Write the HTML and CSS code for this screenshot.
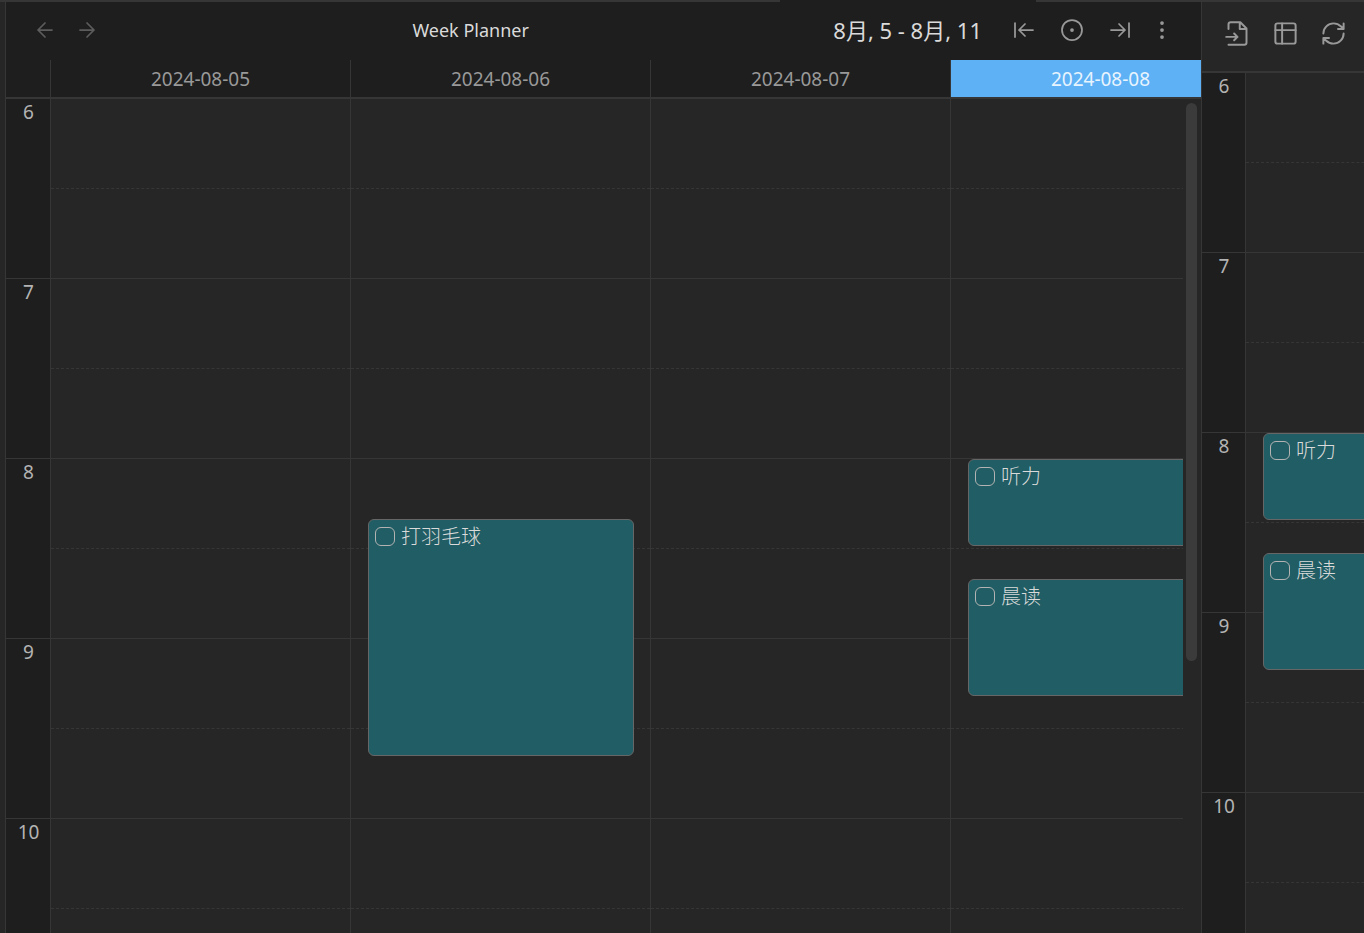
FILE: index.html
```html
<!DOCTYPE html>
<html lang="zh-CN">
<head>
<meta charset="utf-8">
<title>Week Planner</title>
<link rel="stylesheet" href="styles.css">
</head>
<body>
<div class="tab-edge"><span class="edge"></span><span class="active-tab"></span><span class="edge"></span></div>
<div class="workspace">
  <div class="ribbon"></div>
  <main class="pane planner">
    <header class="view-header">
      <nav class="history">
        <button class="icon-button dim" aria-label="Back"><svg viewBox="0 0 24 24"><path d="m12 19-7-7 7-7M19 12H5"/></svg></button>
        <button class="icon-button dim" aria-label="Forward"><svg viewBox="0 0 24 24"><path d="m12 5 7 7-7 7M5 12h14"/></svg></button>
      </nav>
      <h1 class="title">Week Planner</h1>
      <div class="range">8月, 5 - 8月, 11</div>
      <div class="actions">
        <button class="icon-button" aria-label="Previous week"><svg viewBox="0 0 24 24"><path d="M3 19V5M13 6l-6 6 6 6M7 12h14"/></svg></button>
        <button class="icon-button" aria-label="Current week"><svg viewBox="0 0 24 24"><circle cx="12" cy="12" r="10"/><circle cx="12" cy="12" r="1"/></svg></button>
        <button class="icon-button" aria-label="Next week"><svg viewBox="0 0 24 24"><path d="M17 12H3M11 18l6-6-6-6M21 5v14"/></svg></button>
        <button class="icon-button more" aria-label="More options"><svg viewBox="0 0 24 24"><circle cx="12" cy="12" r="1"/><circle cx="12" cy="5" r="1"/><circle cx="12" cy="19" r="1"/></svg></button>
      </div>
    </header>
    <div class="dates">
      <div class="corner"></div>
      <div class="date">2024-08-05</div>
      <div class="date">2024-08-06</div>
      <div class="date">2024-08-07</div>
      <div class="date today">2024-08-08</div>
    </div>
    <div class="body">
      <div class="timeline">
        <div class="ruler">
          <div class="label">6</div><div class="label">7</div><div class="label">8</div><div class="label">9</div><div class="label">10</div>
        </div>
        <div class="day"><div class="hour"></div><div class="hour"></div><div class="hour"></div><div class="hour"></div><div class="hour"></div></div>
        <div class="day">
          <div class="hour"></div><div class="hour"></div><div class="hour"></div><div class="hour"></div><div class="hour"></div>
          <label class="event badminton"><input type="checkbox"><span>打羽毛球</span></label>
        </div>
        <div class="day"><div class="hour"></div><div class="hour"></div><div class="hour"></div><div class="hour"></div><div class="hour"></div></div>
        <div class="day">
          <div class="hour"></div><div class="hour"></div><div class="hour"></div><div class="hour"></div><div class="hour"></div>
          <label class="event listening"><input type="checkbox"><span>听力</span></label>
          <label class="event reading"><input type="checkbox"><span>晨读</span></label>
        </div>
      </div>
      <div class="scroll-track"><div class="scroll-thumb"></div></div>
    </div>
  </main>
  <aside class="pane sidebar">
    <header class="side-header">
      <button class="icon-button large" aria-label="Open daily note"><svg viewBox="0 0 24 24"><path d="M4 22h14a2 2 0 0 0 2-2V7.500L14.500 2H6a2 2 0 0 0-2 2v4M14 2v6h6M2 15h10M9 18l3-3-3-3"/></svg></button>
      <button class="icon-button large" aria-label="Open week planner"><svg viewBox="0 0 24 24"><rect x="3" y="3" width="18" height="18" rx="2"/><path d="M3 9h18M9 3v18"/></svg></button>
      <button class="icon-button large" aria-label="Refresh"><svg viewBox="0 0 24 24"><path d="M3 12a9 9 0 0 1 9-9 9.750 9.750 0 0 1 6.740 2.740L21 8M21 3v5h-5M21 12a9 9 0 0 1-9 9 9.750 9.750 0 0 1-6.740-2.740L3 16M8 16H3v5"/></svg></button>
    </header>
    <div class="timeline">
      <div class="ruler">
        <div class="label">6</div><div class="label">7</div><div class="label">8</div><div class="label">9</div><div class="label">10</div>
      </div>
      <div class="day">
        <div class="hour"></div><div class="hour"></div><div class="hour"></div><div class="hour"></div><div class="hour"></div>
        <label class="event listening"><input type="checkbox"><span>听力</span></label>
        <label class="event reading"><input type="checkbox"><span>晨读</span></label>
      </div>
    </div>
  </aside>
</div>
</body>
</html>
```
FILE: styles.css
```css
:root {
  --bg: #262626;
  --bg-dark: #1e1e1e;
  --line: #363636;
  --muted: #999999;
  --text: #dadada;
  --accent: #5eb1f5;
  --event: #205d64;
}

*, *::before { box-sizing: border-box; }

body {
  margin: 0;
  height: 100vh;
  display: flex;
  flex-direction: column;
  overflow: hidden;
  background: var(--bg);
  color: var(--text);
  font-family: "Noto Sans", "Noto Sans CJK SC", sans-serif;
  font-size: 19px;
}

.tab-edge {
  display: grid;
  grid-template-columns: 1fr 256px 328px;
  height: 2px;
  flex: none;
}
.edge { background: var(--line); }
.active-tab { background: var(--bg-dark); }

.workspace {
  flex: 1;
  min-height: 0;
  display: flex;
}
.ribbon { flex: 0 0 5px; }

.pane {
  display: flex;
  flex-direction: column;
  border-left: 1px solid var(--line);
  overflow: hidden;
}
.planner { flex: 1; min-width: 0; }
.sidebar { flex: 0 0 163px; }

.view-header {
  flex: none;
  display: flex;
  align-items: center;
  height: 58px;
  padding: 0 27px 2px;
  background: var(--bg-dark);
}
.history {
  display: flex;
  gap: 18px;
  padding-right: 9px;
}
.title {
  flex: 1;
  margin: 0;
  text-align: center;
  font-size: 18px;
  font-weight: 400;
  line-height: 28px;
}
.range {
  font-size: 22px;
  line-height: 28px;
  margin-right: 30px;
  white-space: nowrap;
}
.actions { display: flex; gap: 24px; }

.icon-button {
  display: block;
  width: 24px;
  height: 24px;
  padding: 0;
  border: 0;
  background: none;
  color: var(--muted);
}
.icon-button svg {
  display: block;
  width: 100%;
  height: 100%;
  fill: none;
  stroke: currentColor;
  stroke-width: 1.75;
  stroke-linecap: round;
  stroke-linejoin: round;
}
.dim { color: #5c5c5c; }
.more { margin-left: -6px; }
.large { width: 27px; height: 27px; }

.dates {
  flex: none;
  display: flex;
  overflow: hidden;
  background: var(--bg-dark);
  border-bottom: 2px solid var(--line);
}
.corner {
  flex: 0 0 45px;
  border-right: 1px solid var(--line);
}
.date {
  flex: 0 0 300px;
  height: 37px;
  line-height: 39px;
  text-align: center;
  color: var(--muted);
  border-right: 1px solid var(--line);
}
.today {
  background: var(--accent);
  color: #e8f4fe;
}

.body {
  flex: 1;
  min-height: 0;
  display: flex;
}
.timeline {
  flex: 1;
  min-width: 0;
  min-height: 0;
  display: flex;
  align-items: flex-start;
  overflow: hidden;
}
.ruler {
  flex: 0 0 45px;
  background: var(--bg-dark);
  border-right: 1px solid var(--line);
}
.sidebar .ruler { flex-basis: 44px; }
.label {
  height: 180px;
  padding-left: 1px;
  line-height: 26px;
  text-align: center;
  color: #b3b3b3;
  border-bottom: 1px solid var(--line);
}
.day {
  position: relative;
  flex: 0 0 300px;
  border-right: 1px solid var(--line);
}
.hour {
  height: 180px;
  border-bottom: 1px solid var(--line);
}
.hour::before {
  content: "";
  display: block;
  height: 90px;
  border-bottom: 1px dashed var(--line);
}

/* Events are placed by start time: 3px per minute from 6:00 */
.event {
  position: absolute;
  left: 17px;
  right: 16px;
  display: flex;
  align-items: flex-start;
  gap: 6px;
  padding: 2px 6px;
  background: var(--event);
  border: 1px solid #666666;
  border-radius: 6px;
  font-size: 20px;
  font-weight: 300;
  font-family: "Noto Sans CJK SC", sans-serif;
  line-height: 28px;
}
.event input {
  appearance: none;
  flex: none;
  width: 20px;
  height: 19px;
  margin: 5px 0 0;
  border: 1px solid #b3b3b3;
  border-radius: 6px;
}
.badminton { top: 420px; height: 237px; }
.listening { top: 360px; height: 87px; }
.reading { top: 480px; height: 117px; }

.scroll-track {
  flex: 0 0 18px;
  padding: 4px 4px 0 3px;
}
.scroll-thumb {
  height: calc(67% + 2px);
  border-radius: 6px;
  background: #3b3b3b;
}

.side-header {
  flex: none;
  display: flex;
  align-items: center;
  gap: 21px;
  height: 71px;
  padding: 0 0 6px 22px;
  border-bottom: 2px solid var(--line);
}
```
